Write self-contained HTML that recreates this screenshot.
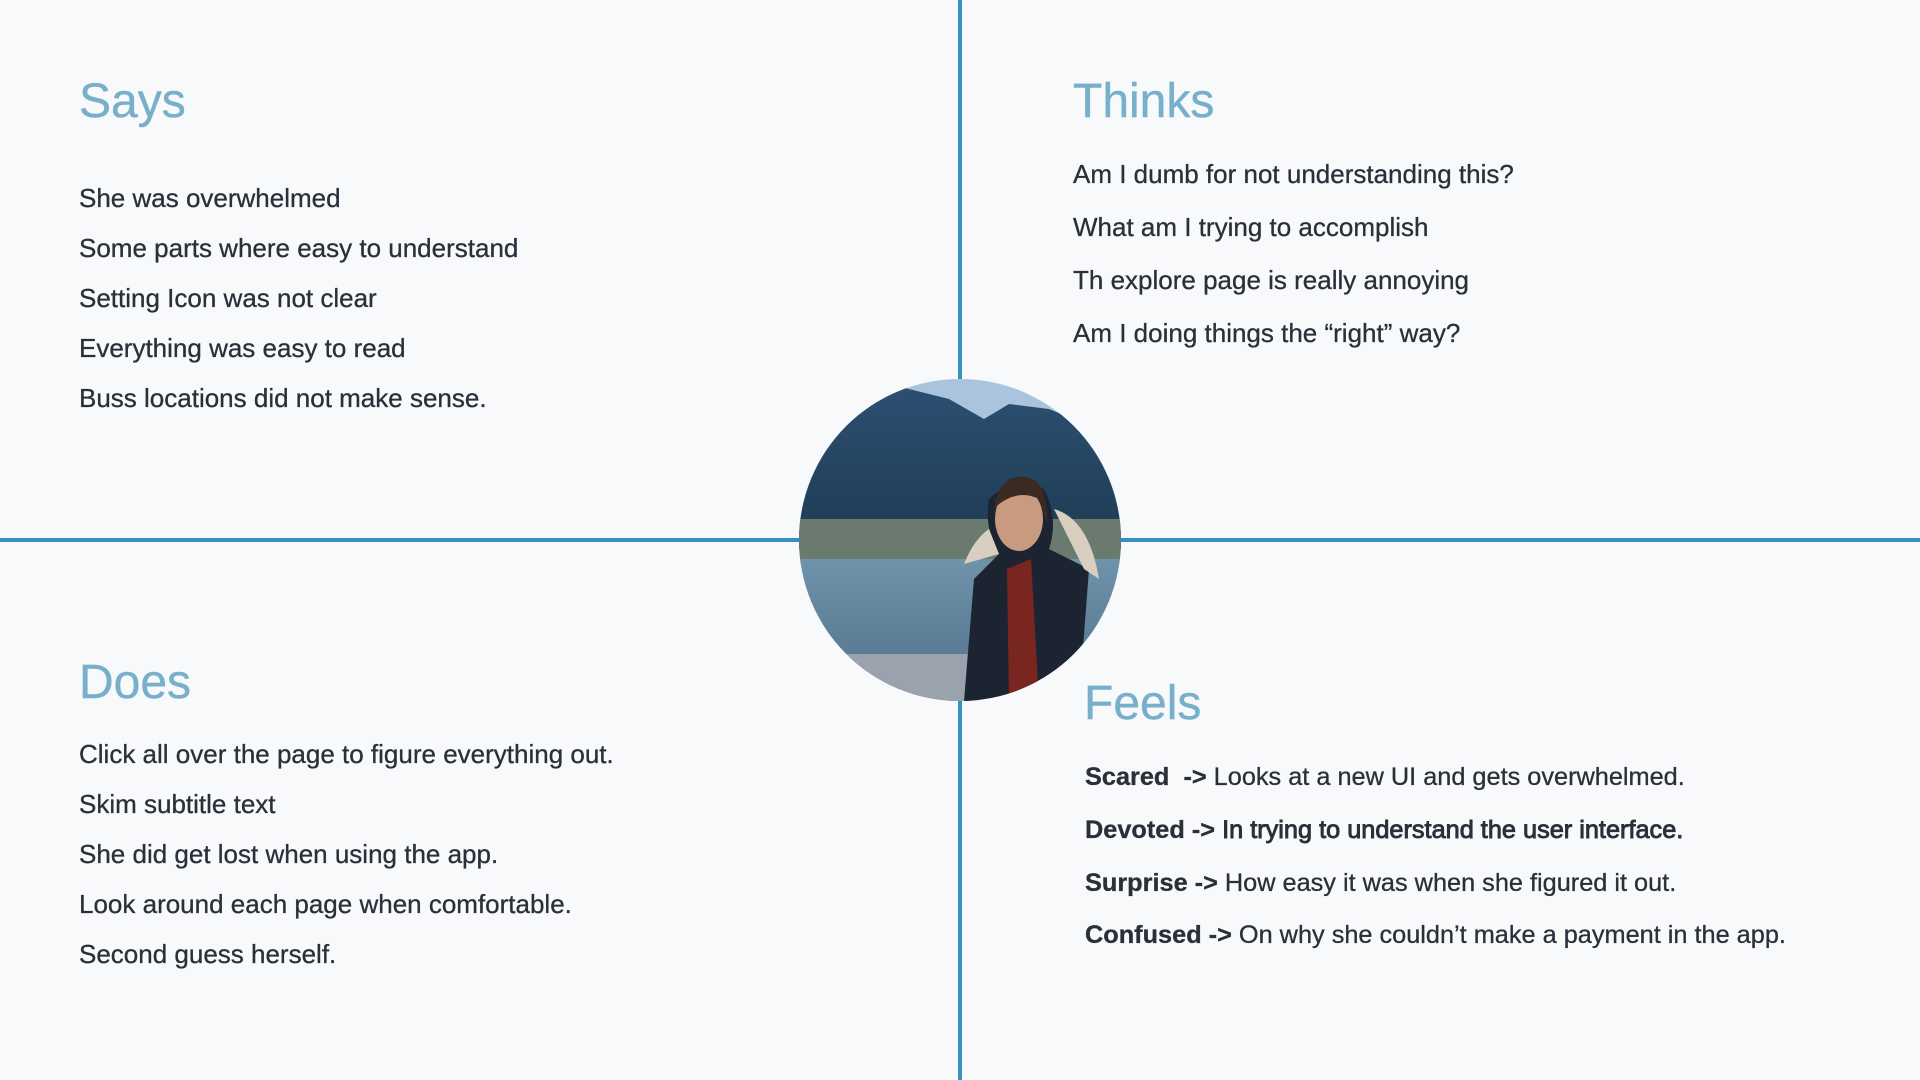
<!DOCTYPE html>
<html><head><meta charset="utf-8"><style>
html,body{margin:0;padding:0;width:1920px;height:1080px;overflow:hidden;background:#f7f9fb;font-family:"Liberation Sans",Arial,sans-serif;}
.h{position:absolute;font-size:48px;line-height:1;color:#78afca;-webkit-text-stroke:0.4px #78afca;}
.t{position:absolute;font-size:26px;line-height:1;color:#2c2f3a;white-space:nowrap;-webkit-text-stroke:0.3px #2c2f3a;}
.f{font-size:25.3px;}
.m{-webkit-text-stroke:0.9px #2c2f3a;}
.vl{position:absolute;left:958px;top:0;width:4px;height:1080px;background:#3a8fc2;}
.hl{position:absolute;left:0;top:538px;width:1920px;height:4px;background:#3a8fc2;}
b{font-weight:bold;}
</style></head><body>
<div class="vl"></div><div class="hl"></div>

<div class="h" style="left:79px;top:78px">Says</div>
<div class="t" style="left:79px;top:185px">She was overwhelmed</div>
<div class="t" style="left:79px;top:235px">Some parts where easy to understand</div>
<div class="t" style="left:79px;top:285px">Setting Icon was not clear</div>
<div class="t" style="left:79px;top:335px">Everything was easy to read</div>
<div class="t" style="left:79px;top:385px">Buss locations did not make sense.</div>

<div class="h" style="left:1073px;top:78px">Thinks</div>
<div class="t" style="left:1073px;top:161px">Am I dumb for not understanding this?</div>
<div class="t" style="left:1073px;top:214px">What am I trying to accomplish</div>
<div class="t" style="left:1073px;top:267px">Th explore page is really annoying</div>
<div class="t" style="left:1073px;top:320px">Am I doing things the “right” way?</div>

<div class="h" style="left:79px;top:659px">Does</div>
<div class="t" style="left:79px;top:741px">Click all over the page to figure everything out.</div>
<div class="t" style="left:79px;top:791px">Skim subtitle text</div>
<div class="t" style="left:79px;top:841px">She did get lost when using the app.</div>
<div class="t" style="left:79px;top:891px">Look around each page when comfortable.</div>
<div class="t" style="left:79px;top:941px">Second guess herself.</div>

<div class="h" style="left:1084px;top:680px">Feels</div>
<div class="t f" style="left:1085px;top:765px"><b>Scared</b> &nbsp;<b>-&gt;</b> Looks at a new UI and gets overwhelmed.</div>
<div class="t f" style="left:1085px;top:818px"><b>Devoted -&gt;</b> <span class="m">In trying to understand the user interface.</span></div>
<div class="t f" style="left:1085px;top:871px"><b>Surprise -&gt;</b> How easy it was when she figured it out.</div>
<div class="t f" style="left:1085px;top:923px"><b>Confused -&gt;</b> On why she couldn’t make a payment in the app.</div>

<svg style="position:absolute;left:799px;top:379px" width="322" height="322" viewBox="0 0 322 322">
<defs><clipPath id="c"><circle cx="161" cy="161" r="161"/></clipPath>
<linearGradient id="w" x1="0" y1="0" x2="0" y2="1"><stop offset="0" stop-color="#6f93ab"/><stop offset="1" stop-color="#4f7189"/></linearGradient>
<linearGradient id="m" x1="0" y1="0" x2="0" y2="1"><stop offset="0" stop-color="#2c4f72"/><stop offset="1" stop-color="#1f3b52"/></linearGradient></defs>
<g clip-path="url(#c)">
<rect width="322" height="322" fill="#a9c4dc"/>
<path d="M0 40 L90 5 L150 20 L185 40 L210 25 L250 30 L322 60 L322 170 L0 170Z" fill="url(#m)"/>
<rect x="0" y="140" width="322" height="45" fill="#6b7a6f"/>
<rect x="0" y="180" width="322" height="142" fill="url(#w)"/>
<rect x="0" y="275" width="180" height="47" fill="#9aa3ad"/>
<path d="M190 120 Q215 95 245 110 Q260 140 250 170 L290 190 L280 322 L165 322 L175 200 L200 175 Q185 150 190 120Z" fill="#1c2432"/>
<path d="M190 150 Q175 160 165 185 L200 175Z M255 130 Q290 140 300 200 L285 190Z" fill="#d8cfc0"/>
<ellipse cx="220" cy="140" rx="24" ry="32" fill="#c89a80"/>
<path d="M195 130 Q200 95 225 98 Q250 100 248 145 L240 120 Q220 110 200 125Z" fill="#3a2a22"/>
<path d="M208 190 L232 180 L240 322 L210 322Z" fill="#7a2620"/>
</g></svg>
</body></html>
